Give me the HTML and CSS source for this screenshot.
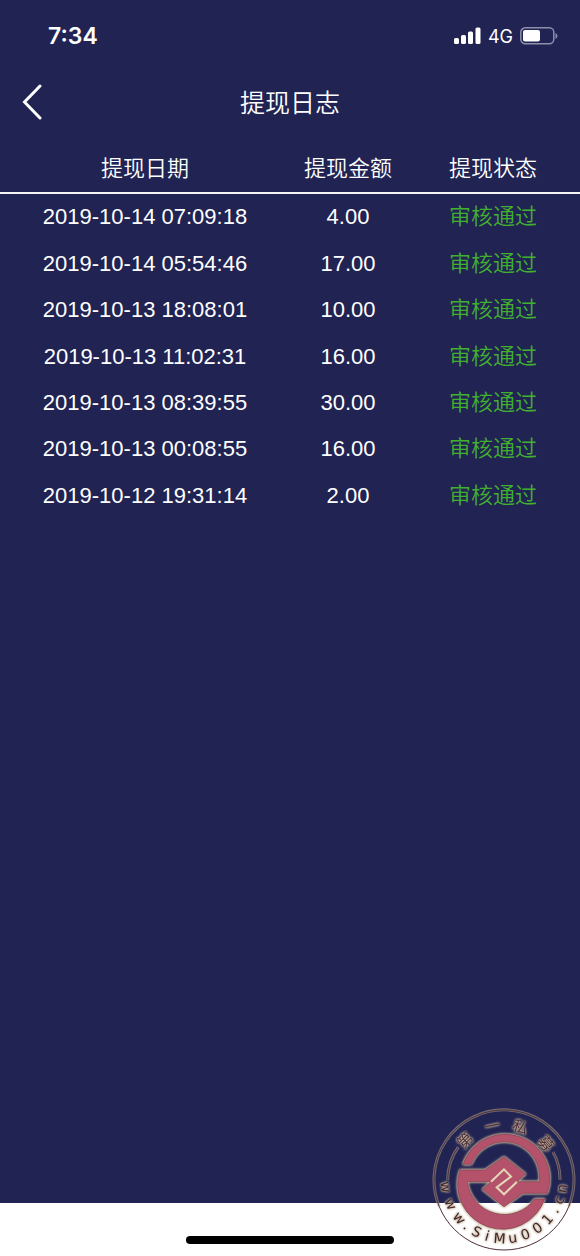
FILE: index.html
```html
<!DOCTYPE html>
<html lang="zh-CN">
<head>
<meta charset="utf-8">
<meta name="viewport" content="width=device-width, initial-scale=1">
<title>提现日志</title>
<link rel="stylesheet" href="styles.css">
</head>
<body>
<div class="screen">
  <div class="status-bar">
    <span class="clock">7:34</span>
    <div class="indicators">
      <svg class="signal" viewBox="0 0 28 18" aria-hidden="true">
        <rect x="1" y="11" width="5" height="6" rx="1.5"/>
        <rect x="8" y="8" width="5" height="9" rx="1.5"/>
        <rect x="15" y="4.500" width="5" height="12.500" rx="1.500"/>
        <rect x="22.500" y="0.500" width="5" height="16.500" rx="1.500"/>
      </svg>
      <span class="network">4G</span>
      <svg class="battery" viewBox="0 0 38 18" aria-hidden="true">
        <rect class="battery-shell" x="0.800" y="0.800" width="33" height="16" rx="4.500"/>
        <rect class="battery-level" x="3" y="3" width="17" height="11.500" rx="2"/>
        <path class="battery-tip" d="M35.500 6v6q2-1 2-3t-2-3z"/>
      </svg>
    </div>
  </div>
  <header class="nav">
    <button class="back" type="button" aria-label="返回">
      <svg viewBox="0 0 20 36" aria-hidden="true"><path d="M18 2 2.500 18 18 34"/></svg>
    </button>
    <h1 class="title">提现日志</h1>
  </header>
  <main class="content">
    <table class="log">
      <thead>
        <tr><th class="col-date" scope="col">提现日期</th><th class="col-amount" scope="col">提现金额</th><th class="col-state" scope="col">提现状态</th></tr>
      </thead>
      <tbody>
        <tr><td>2019-10-14 07:09:18</td><td>4.00</td><td class="passed">审核通过</td></tr>
        <tr><td>2019-10-14 05:54:46</td><td>17.00</td><td class="passed">审核通过</td></tr>
        <tr><td>2019-10-13 18:08:01</td><td>10.00</td><td class="passed">审核通过</td></tr>
        <tr><td>2019-10-13 11:02:31</td><td>16.00</td><td class="passed">审核通过</td></tr>
        <tr><td>2019-10-13 08:39:55</td><td>30.00</td><td class="passed">审核通过</td></tr>
        <tr><td>2019-10-13 00:08:55</td><td>16.00</td><td class="passed">审核通过</td></tr>
        <tr><td>2019-10-12 19:31:14</td><td>2.00</td><td class="passed">审核通过</td></tr>
      </tbody>
    </table>
  </main>
  <footer class="home-area"><div class="home-bar"></div></footer>
  <svg class="seal" viewBox="0 0 465 468" role="img" aria-label="第一私募 www.SiMu001.cn">
    <defs>
      <path id="seal-top" d="M87 240a150 150 0 0 1 300 0"/>
      <path id="seal-bottom" d="M47 240a190 190 0 0 0 380 0"/>
    </defs>
    <g class="seal-halo">
      <path d="M43 320A210 210 0 1 1 431 320M68 240A169 169 0 0 1 100 141M384 156A169 169 0 0 1 405 240"/>
    </g>
    <g class="seal-lines">
      <circle cx="237" cy="240" r="210"/>
      <path d="M68 240A169 169 0 0 1 100 141M384 156A169 169 0 0 1 405 240"/>
    </g>
    <g class="seal-mark">
      <path d="M114 193A130 130 0 0 1 367 280H294L237 320 172 268 198 245 237 208 258 230 215 262 237 283 276 245H343A106 106 0 0 0 139 193Z"/>
      <path d="M105 210H180L237 170 302 222 276 245 237 283 215 262 258 230 237 208 198 245H127A112 112 0 0 0 329 297H359A131 131 0 0 1 105 210Z"/>
      <path class="seal-groove" d="M198 245 237 208 258 230 215 262 237 283 276 245"/>
    </g>
    <text class="seal-name" dx="96 39 30 38"><textPath href="#seal-top">第一私募</textPath></text>
    <text class="seal-url" dx="5 24 19 15 17 18 17 11 16 18 16 18 17 14"><textPath href="#seal-bottom">www.SiMu001.cn</textPath></text>
  </svg>
</div>
</body>
</html>
```
FILE: styles.css
```css
* { box-sizing: border-box; }

body {
  margin: 0;
  background: #212353;
  color: #fff;
  font-family: "Liberation Sans", "Noto Sans CJK SC", sans-serif;
}

.screen {
  position: relative;
  display: flex;
  flex-direction: column;
  min-height: 100vh;
}

.status-bar {
  display: flex;
  justify-content: space-between;
  align-items: center;
  padding: 20px 22px 0 48px;
  height: 52px;
  font-family: Inter, sans-serif;
}

.clock { font-size: 23px; font-weight: 600; }
.indicators { display: flex; align-items: center; gap: 7px; }
.signal { width: 28px; height: 18px; fill: #fff; }
.network { font-size: 18px; }
.battery { width: 38px; height: 18px; }
.battery-shell { fill: none; stroke: #8e8fa9; stroke-width: 1.5; }
.battery-level { fill: #fff; }
.battery-tip { fill: #8e8fa9; }

.nav {
  display: grid;
  grid-template-columns: 64px 1fr 64px;
  align-items: center;
  height: 100px;
}

.back {
  display: flex;
  padding: 0 0 0 22px;
  border: 0;
  background: none;
}

.back svg {
  width: 20px;
  height: 36px;
  fill: none;
  stroke: #fff;
  stroke-width: 3;
  stroke-linecap: round;
}

.title {
  margin: 0;
  padding-bottom: 2px;
  font-size: 25px;
  font-weight: 350;
  text-align: center;
}

.content { flex: 1; }

.log {
  width: 100%;
  height: 374px;
  margin-top: -7px;
  border-collapse: collapse;
  table-layout: fixed;
  font-size: 22px;
  line-height: 32px;
  text-align: center;
}

.log th {
  height: 48px;
  padding: 0;
  border-bottom: 2px solid #f4f4f2;
  font-weight: 350;
}

.log td { padding: 0; }
.col-date { width: 50%; }
.col-amount { width: 20%; }
.col-state { width: 30%; }
.log .passed { color: #42b02f; font-weight: 350; }

.home-area {
  display: flex;
  justify-content: center;
  align-items: flex-end;
  height: 53px;
  padding-bottom: 12px;
  background: #fff;
}

.home-bar {
  width: 36%;
  height: 8px;
  border-radius: 4px;
  background: #000;
}

.seal {
  position: absolute;
  right: 0;
  bottom: 0;
  width: 155px;
  height: 156px;
}

.seal-halo {
  fill: none;
  stroke: #b5a68c;
  stroke-width: 9;
  opacity: 0.55;
}

.seal-lines { fill: none; stroke: #513039; stroke-width: 3; }

.seal-mark {
  fill: #b4526b;
  stroke: #7d3c4c;
  stroke-width: 2;
  filter: drop-shadow(0 0 3px #d8c7ab) drop-shadow(0 0 3px #b5a68c);
}

.seal-mark .seal-groove { fill: none; stroke: #e6d6ba; stroke-width: 6; }

.seal-name,
.seal-url {
  filter: drop-shadow(0 0 3px #d8c7ab) drop-shadow(0 0 3px #b5a68c);
}

.seal-name { fill: #513039; font: 46px "Noto Sans CJK SC", sans-serif; }
.seal-url { fill: #42262c; font: 42px "DejaVu Sans", sans-serif; }
```
